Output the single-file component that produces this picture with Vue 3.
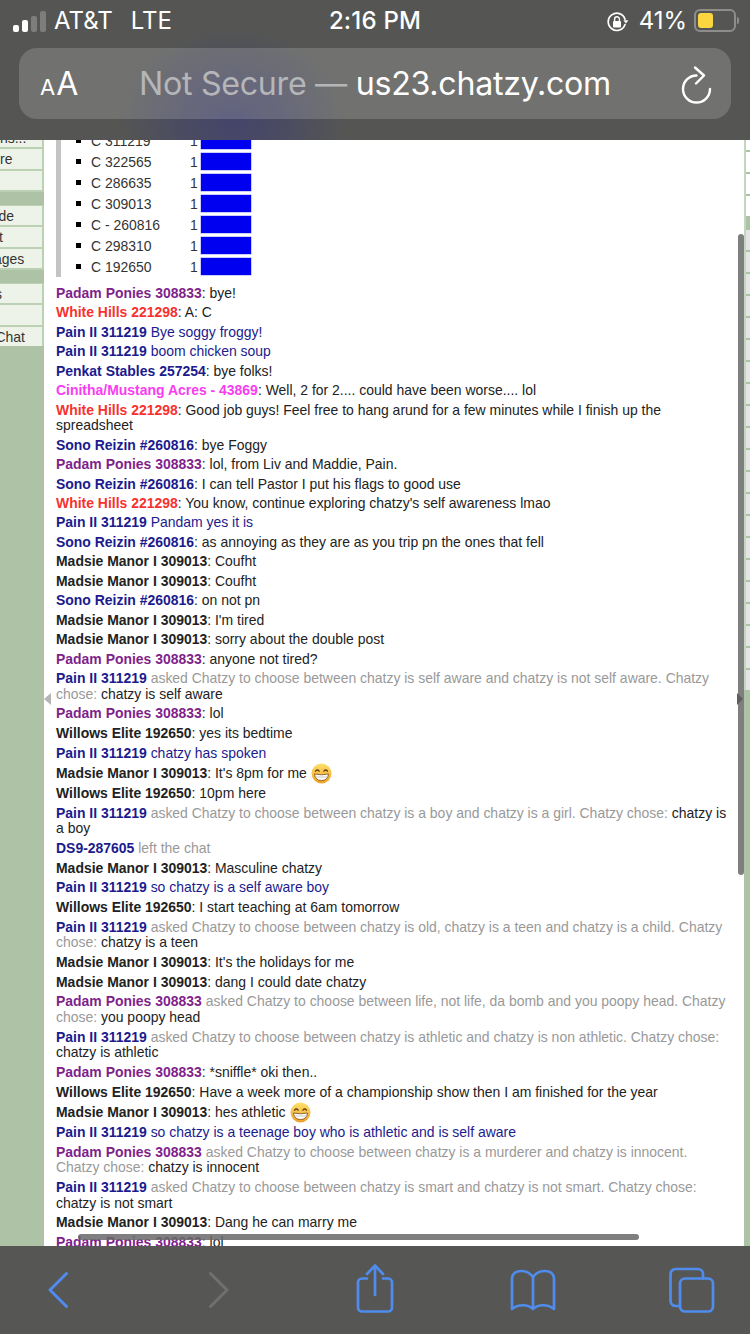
<script setup>
const leftCells = [
  { t: 'ns...', off: 0 }, { t: 're', off: 0 }, { t: '', off: 0 }, { gap: true },
  { t: 'de', off: -1.5 }, { t: 't', off: -1 }, { t: 'ages', off: -6 }, { gap: true },
  { t: 's', off: -5 }, { t: '', off: 0 }, { t: 'Chat', off: -4.5 }
]
const poll = ['C 311219', 'C 322565', 'C 286635', 'C 309013', 'C - 260816', 'C 298310', 'C 192650']
const grayCells = Array.from({ length: 21 }, (_, i) => i)

const PP = ['Padam Ponies 308833', 'p']
const WH = ['White Hills 221298', 'r']
const PN = ['Pain II 311219', 'n']
const SR = ['Sono Reizin #260816', 'n']
const MM = ['Madsie Manor I 309013', 'k']
const WE = ['Willows Elite 192650', 'k']
const say = (w, t, e) => ({ n: w[0], c: w[1], t: ': ' + t, tc: 'k', e })
const blue = (t) => ({ n: PN[0], c: 'n', t: ' ' + t, tc: 'n' })
const ask = (w, g, b) => ({ n: w[0], c: w[1], t: ' ' + g + ' ', tc: 'g', b })

const msgs = [
  say(PP, 'bye!'),
  say(WH, 'A: C'),
  blue('Bye soggy froggy!'),
  blue('boom chicken soup'),
  say(['Penkat Stables 257254', 'n'], 'bye folks!'),
  say(['Cinitha/Mustang Acres - 43869', 'm'], 'Well, 2 for 2.... could have been worse.... lol'),
  say(WH, 'Good job guys! Feel free to hang arund for a few minutes while I finish up the spreadsheet'),
  say(SR, 'bye Foggy'),
  say(PP, 'lol, from Liv and Maddie, Pain.'),
  say(SR, 'I can tell Pastor I put his flags to good use'),
  say(WH, "You know, continue exploring chatzy's self awareness lmao"),
  blue('Pandam yes it is'),
  say(SR, 'as annoying as they are as you trip pn the ones that fell'),
  say(MM, 'Coufht'),
  say(MM, 'Coufht'),
  say(SR, 'on not pn'),
  say(MM, "I'm tired"),
  say(MM, 'sorry about the double post'),
  say(PP, 'anyone not tired?'),
  ask(PN, 'asked Chatzy to choose between chatzy is self aware and chatzy is not self aware. Chatzy chose:', 'chatzy is self aware'),
  say(PP, 'lol'),
  say(WE, 'yes its bedtime'),
  blue('chatzy has spoken'),
  say(MM, "It's 8pm for me", true),
  say(WE, '10pm here'),
  ask(PN, 'asked Chatzy to choose between chatzy is a boy and chatzy is a girl. Chatzy chose:', 'chatzy is a boy'),
  { n: 'DS9-287605', c: 'n', t: ' left the chat', tc: 'g' },
  say(MM, 'Masculine chatzy'),
  blue('so chatzy is a self aware boy'),
  say(WE, 'I start teaching at 6am tomorrow'),
  ask(PN, 'asked Chatzy to choose between chatzy is old, chatzy is a teen and chatzy is a child. Chatzy chose:', 'chatzy is a teen'),
  say(MM, "It's the holidays for me"),
  say(MM, 'dang I could date chatzy'),
  ask(PP, 'asked Chatzy to choose between life, not life, da bomb and you poopy head. Chatzy chose:', 'you poopy head'),
  ask(PN, 'asked Chatzy to choose between chatzy is athletic and chatzy is non athletic. Chatzy chose:', 'chatzy is athletic'),
  say(PP, '*sniffle* oki then..'),
  say(WE, 'Have a week more of a championship show then I am finished for the year'),
  say(MM, 'hes athletic', true),
  blue('so chatzy is a teenage boy who is athletic and is self aware'),
  ask(PP, 'asked Chatzy to choose between chatzy is a murderer and chatzy is innocent. Chatzy chose:', 'chatzy is innocent'),
  ask(PN, 'asked Chatzy to choose between chatzy is smart and chatzy is not smart. Chatzy chose:', 'chatzy is not smart'),
  say(MM, 'Dang he can marry me'),
  say(PP, 'lol')
]
</script>

<template>
  <div class="phone">
    <header class="top">
      <div class="status">
        <div class="st-left">
          <div class="signal"><i class="b1"></i><i class="b2"></i><i class="b3"></i><i class="b4"></i></div>
          <span class="carrier">AT&amp;T</span>
          <span class="lte">LTE</span>
        </div>
        <div class="time">2:16 PM</div>
        <div class="st-right">
          <svg class="rot" width="22" height="20" viewBox="0 0 22 20" fill="none">
            <path d="M18 12.5A8.6 8.6 0 1 1 18 7.2" stroke="#fff" stroke-width="1.7" stroke-linecap="round"/>
            <path d="M16.4 8.2h5l-2.5 3.4z" fill="#fff"/>
            <rect x="6" y="9" width="8" height="6.4" rx="1" fill="#fff"/>
            <path d="M7.6 9V7.2a2.4 2.4 0 0 1 4.8 0V9" stroke="#fff" stroke-width="1.4"/>
          </svg>
          <span class="pct">41%</span>
          <div class="battery"><div class="fill"></div></div>
          <div class="nub"></div>
        </div>
      </div>
      <div class="urlbar">
        <div class="aa"><span class="sm">A</span><span class="lg">A</span></div>
        <div class="url"><span class="dim">Not Secure — </span>us23.chatzy.com</div>
        <svg class="reload" width="32" height="40" viewBox="0 0 32 40" fill="none">
          <path d="M15.500 11.500A13.500 13.500 0 1 0 29 25" stroke="#fff" stroke-width="2.400" stroke-linecap="round"/>
          <path d="M14 3.500L23 11.500 15 19.500" stroke="#fff" stroke-width="2.400" stroke-linecap="round" stroke-linejoin="round"/>
        </svg>
      </div>
    </header>

    <main class="main">
      <aside class="left">
        <div class="cells">
          <template v-for="(c, i) in leftCells" :key="i">
            <div v-if="c.gap" class="gap"></div>
            <div v-else class="cell"><span :style="{ marginLeft: c.off + 'px' }">{{ c.t }}</span></div>
          </template>
        </div>
      </aside>

      <section class="content">
        <div class="poll">
          <div v-for="p in poll" :key="p" class="pollrow">
            <i class="bullet"></i>
            <span class="pname">{{ p }}</span>
            <span class="pcount">1</span>
            <span class="pbar"></span>
          </div>
        </div>
        <div class="chat">
          <div v-for="(m, i) in msgs" :key="i" class="msg" :class="{ tight: i < 19 }">
            <b :class="m.c">{{ m.n }}</b><span :class="m.tc">{{ m.t }}</span><span v-if="m.b" class="k">{{ m.b }}</span>
            <svg v-if="m.e" class="emoji" width="21" height="21" viewBox="0 0 21 21">
              <defs>
                <linearGradient id="emo" x1="0" y1="0" x2="0" y2="1">
                  <stop offset="0" stop-color="#fde06a"/>
                  <stop offset="1" stop-color="#eea02a"/>
                </linearGradient>
              </defs>
              <circle cx="10.500" cy="10.500" r="10" fill="url(#emo)"/>
              <path d="M4.500 8.200q1.800-2.400 3.600 0M12.900 8.200q1.800-2.400 3.600 0" fill="none" stroke="#6b3f10" stroke-width="1.300" stroke-linecap="round"/>
              <path d="M3.500 11q7 1.600 14 0q-.6 6.500-7 6.500t-7-6.500z" fill="#fff" stroke="#7a4a12" stroke-width=".8"/>
              <path d="M4 14h13" stroke="#b9b2a5" stroke-width=".7"/>
            </svg>
          </div>
        </div>
      </section>

      <aside class="right">
        <div class="rcell white top1"></div>
        <div class="rcell white"></div>
        <div class="rcell white"></div>
        <div class="rcell white"></div>
        <div class="rgap"></div>
        <div v-for="g in grayCells" :key="g" class="rcell grayc"></div>
      </aside>

      <div class="vscroll"></div>
      <div class="hscroll"></div>
      <div class="tri tri-l"></div>
      <div class="tri tri-r"></div>
    </main>

    <footer class="toolbar">
      <svg class="t-back" width="20" height="52" viewBox="0 0 20 52" fill="none">
        <path d="M18.500 9.500L2 26l16.500 16.500" stroke="#4f8ced" stroke-width="3" stroke-linecap="round" stroke-linejoin="round"/>
      </svg>
      <svg class="t-fwd" width="20" height="52" viewBox="0 0 20 52" fill="none">
        <path d="M1.500 9.500L18 26 1.500 42.500" stroke="#707070" stroke-width="3" stroke-linecap="round" stroke-linejoin="round"/>
      </svg>
      <svg class="t-share" width="38" height="52" viewBox="0 0 38 52" fill="none" stroke="#4f8ced" stroke-width="2.700" stroke-linecap="round" stroke-linejoin="round">
        <path d="M11 14.500H6a4 4 0 0 0-4 4V43.500a4 4 0 0 0 4 4H32a4 4 0 0 0 4-4V18.500a4 4 0 0 0-4-4H27"/>
        <path d="M19 31V2M11 10l8-8.500 8 8.500"/>
      </svg>
      <svg class="t-book" width="46" height="52" viewBox="0 0 46 52" fill="none" stroke="#4f8ced" stroke-width="2.700" stroke-linecap="round" stroke-linejoin="round">
        <path d="M2 45V15C2 9.500 6 7 11 7c5 0 9 2 12 6 3-4 7-6 12-6 5 0 9 2.500 9 8V45c-6-5-16-5-21 0C18 40 8 40 2 45zM23 13V45"/>
      </svg>
      <svg class="t-tabs" width="46" height="52" viewBox="0 0 46 52" fill="none" stroke="#4f8ced" stroke-width="2.700" stroke-linecap="round" stroke-linejoin="round">
        <rect x="11" y="14.500" width="33" height="33" rx="5"/>
        <path d="M34 14.500V10a5 5 0 0 0-5-5H6.500a5 5 0 0 0-5 5V37a5 5 0 0 0 5 5H11"/>
      </svg>
    </footer>
  </div>
</template>

<style scoped>
.phone {
  width: 750px;
  height: 1334px;
  display: flex;
  flex-direction: column;
  overflow: hidden;
  background: #fff;
}

/* Header */
.top {
  height: 140px;
  flex: none;
  color: #fff;
  font-family: Inter, "Liberation Sans", sans-serif;
  background:
    radial-gradient(ellipse 115px 95px at 232px 122px, #44446a 0%, rgba(68, 68, 106, 0.6) 45%, rgba(68, 68, 106, 0) 100%),
    #555653;
}
.status {
  height: 42px;
  display: grid;
  grid-template-columns: 1fr auto 1fr;
  align-items: center;
  font-size: 24px;
  line-height: 42px;
}
.st-left {
  display: flex;
  align-items: center;
  padding-left: 13px;
}
.signal {
  width: 33px;
  height: 21px;
  display: flex;
  align-items: flex-end;
  gap: 3.500px;
  margin-right: 8px;
}
.signal i {
  width: 5.500px;
  border-radius: 2px;
  background: #fff;
}
.signal .b1 { height: 7px; }
.signal .b2 { height: 12px; }
.signal .b3 { height: 16px; background: #7d7e7b; }
.signal .b4 { height: 21px; background: #7d7e7b; }
.lte { margin-left: 18px; }
.time { font-weight: 500; letter-spacing: 0.2px; }
.st-right {
  display: flex;
  align-items: center;
  justify-content: flex-end;
  padding-right: 11px;
}
.rot { margin-right: 10px; margin-top: 1px; }
.pct { margin-right: 7px; }
.battery {
  width: 42px;
  height: 23px;
  box-sizing: border-box;
  border: 2px solid #8d8e8b;
  border-radius: 6px;
  padding: 2px;
  margin-top: -2px;
}
.fill {
  width: 15px;
  height: 15px;
  border-radius: 3px;
  background: #fbd641;
}
.nub {
  width: 2px;
  height: 7px;
  margin-left: 1px;
  margin-top: -2px;
  border-radius: 0 2px 2px 0;
  background: #8d8e8b;
}
.urlbar {
  margin: 6px 19px 0;
  height: 71px;
  border-radius: 18px;
  background: rgba(255, 255, 255, 0.165);
  display: grid;
  grid-template-columns: 1fr auto 1fr;
  align-items: center;
}
.aa { padding-left: 21px; display: flex; align-items: baseline; gap: 1px; }
.sm { font-size: 22px; }
.lg { font-size: 32px; }
.url { font-size: 32.200px; letter-spacing: -0.3px; white-space: nowrap; }
.dim { color: #b5b6b8; }
.reload { justify-self: end; margin-right: 18px; }

/* Main */
.main {
  position: relative;
  flex: 1;
  min-height: 0;
  display: flex;
  overflow: hidden;
  font-family: "Liberation Sans", Arial, sans-serif;
  font-size: 13.960px;
  color: #222;
  background: #aec3a6;
}
.left {
  flex: none;
  width: 44px;
  overflow: hidden;
}
.cells {
  width: 44px;
  margin-top: -12.500px;
  background: #bcd0b4;
  box-sizing: border-box;
  padding-right: 2px;
}
.cell {
  height: 19.500px;
  margin-bottom: 2px;
  background: #eef3ea;
  line-height: 20px;
  white-space: nowrap;
  overflow: hidden;
  color: #333;
}
.cell span { display: block; }
.gap {
  height: 13px;
  margin: 0 -2px 0.5px 0;
  background: #aec3a6;
}
.content {
  flex: 1;
  min-width: 0;
  background: #fff;
  padding-left: 12px;
  box-sizing: border-box;
}
.poll {
  margin-top: -10px;
  margin-bottom: 7px;
  border-left: 5px solid #c4c4c4;
  height: 147px;
}
.pollrow {
  height: 21px;
  display: flex;
  align-items: center;
}
.bullet {
  width: 5px;
  height: 5px;
  margin-left: 15px;
  background: #000;
  flex: none;
}
.pname { margin-left: 10px; width: 99px; color: #333; white-space: nowrap; }
.pcount { width: 11px; color: #333; }
.pbar {
  width: 50px;
  height: 17px;
  background: #0000f0;
  box-shadow: 0 0 0 0.5px #9a9af5;
}
.chat { padding-right: 12px; }
.msg {
  padding: 2px 0;
  line-height: 15.680px;
}
.msg.tight { line-height: 15.460px; }
.msg b { font-weight: 700; }
.p { color: #801f8c; }
.r { color: #f8312f; }
.n { color: #1b1b8e; }
.m { color: #f93cf0; }
.k { color: #222; }
.g { color: #999; }
.emoji {
  vertical-align: middle;
  margin: -3px 0 -2px 4px;
}
.right {
  flex: none;
  width: 6px;
  box-sizing: border-box;
  border-left: 2px solid #c5d6be;
  background: #aec3a6;
  border-image: linear-gradient(#c5d6be 0, #c5d6be 550px, #aec3a6 550px) 1;
}
.rcell { height: 20px; margin-bottom: 2px; }
.white { background: #fff; }
.white.top1 { height: 10px; }
.rgap { height: 13px; margin-top: -1px; }
.grayc { background: #e4e4e4; }
.vscroll {
  position: absolute;
  left: 738px;
  top: 94px;
  width: 6px;
  height: 641px;
  border-radius: 3px;
  background: #7f7f7f;
}
.hscroll {
  position: absolute;
  left: 78px;
  top: 1094px;
  width: 561px;
  height: 6px;
  border-radius: 3px;
  background: rgba(105, 105, 105, 0.85);
}
.tri {
  position: absolute;
  top: 553px;
  width: 0;
  height: 0;
  border-top: 6px solid transparent;
  border-bottom: 6px solid transparent;
}
.tri-l { left: 44px; border-right: 7px solid #b5b5b5; }
.tri-r { left: 737px; border-left: 6px solid #5e5e5e; }

/* Toolbar */
.toolbar {
  height: 88px;
  flex: none;
  display: flex;
  align-items: center;
  background: #565654;
}
.t-back { margin-left: 48px; }
.t-fwd { margin-left: 141px; }
.t-share { margin-left: 127px; }
.t-book { margin-left: 116px; }
.t-tabs { margin-left: 113px; }
</style>
